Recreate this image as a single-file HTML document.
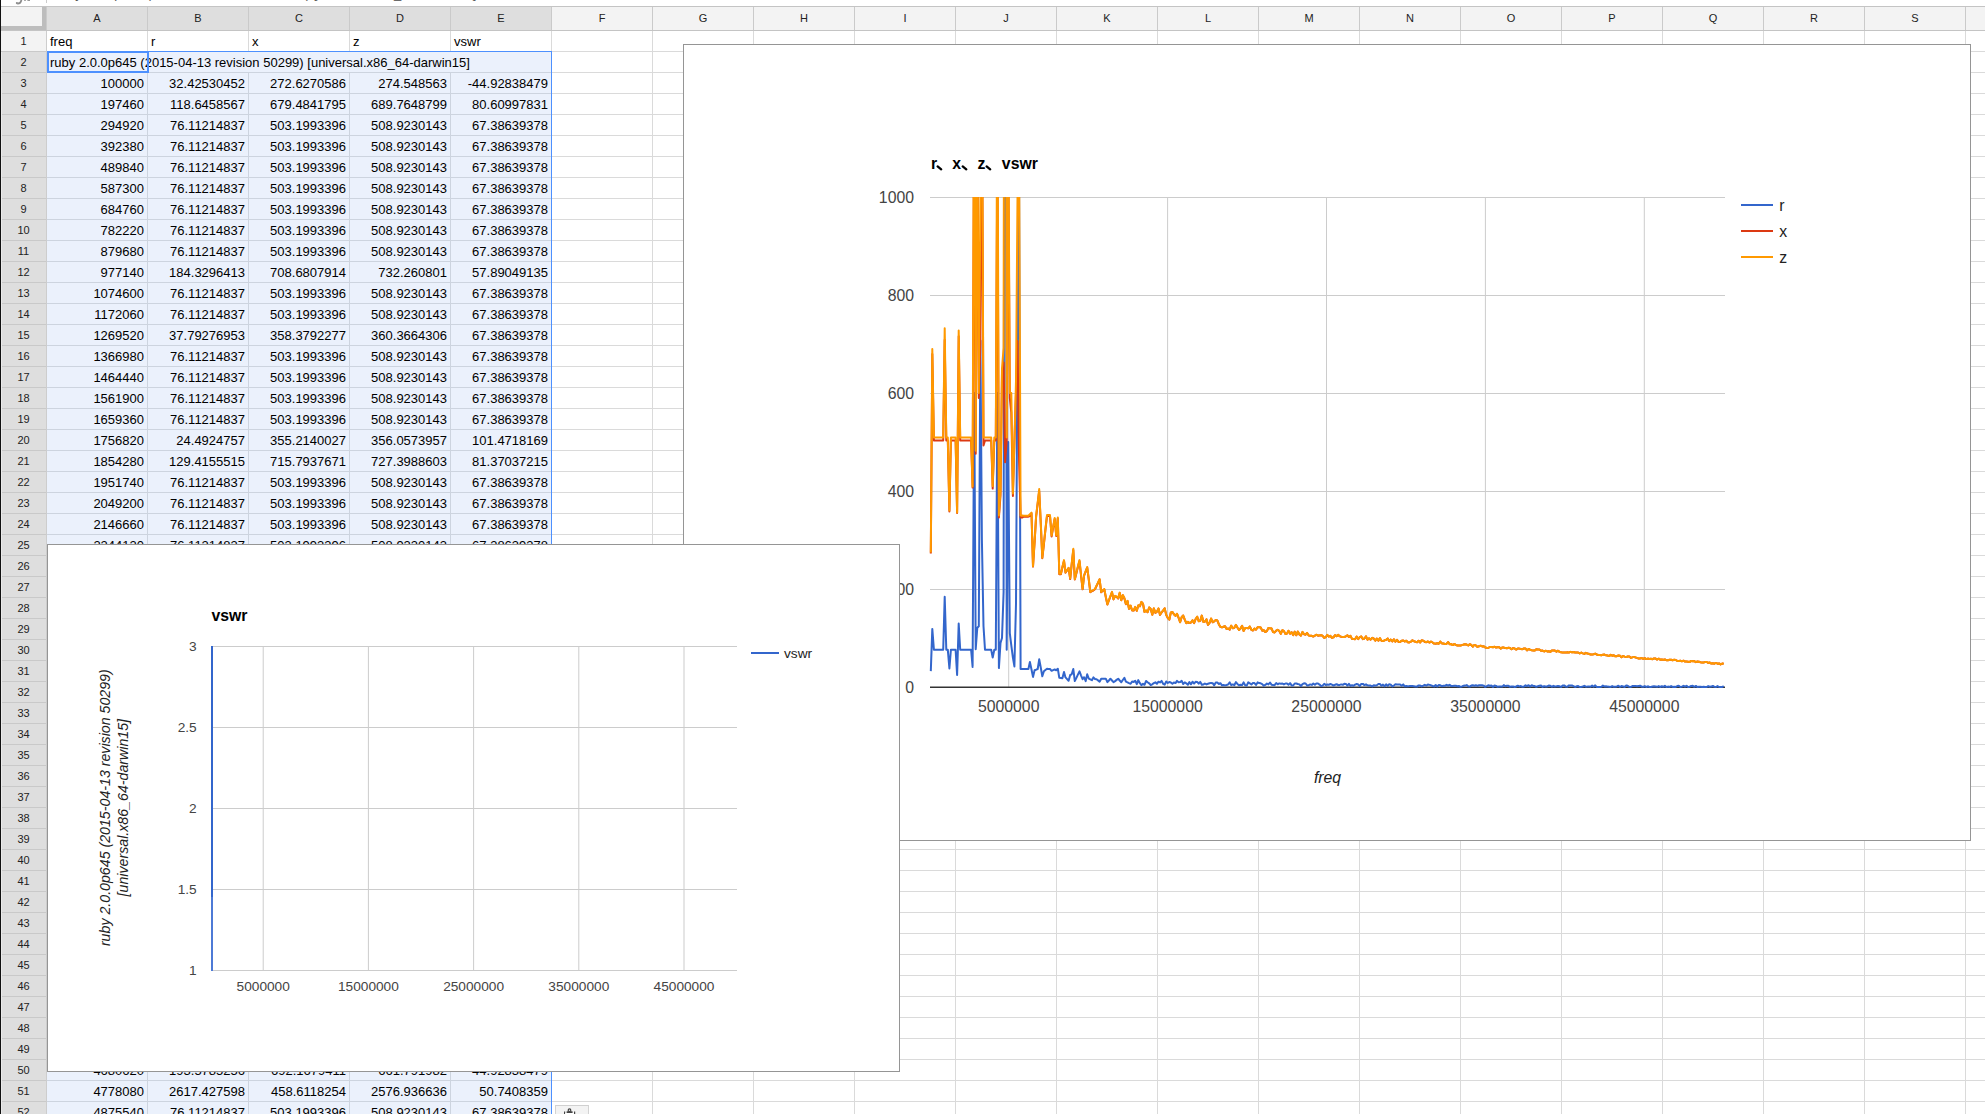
<!DOCTYPE html><html><head><meta charset="utf-8"><style>

html,body{margin:0;padding:0;}
body{width:1985px;height:1114px;overflow:hidden;position:relative;background:#fff;font-family:"Liberation Sans",sans-serif;}
.a{position:absolute;}
.t{position:absolute;white-space:nowrap;font-size:13px;color:#000;line-height:21px;}
.r{text-align:right;}
.ch{position:absolute;top:7px;height:23px;line-height:23px;text-align:center;font-size:11px;color:#222;}
.rh{position:absolute;left:1px;width:45px;height:21px;line-height:21px;text-align:center;font-size:11px;color:#222;}

</style></head><body>
<div class="a" style="left:0;top:0;width:1985px;height:6px;overflow:hidden;background:#fff">
<svg class="a" style="left:0;top:0" width="40" height="6" viewBox="0 0 40 6"><path d="M21.6,-1 C21.2,2.2 19.6,3.9 17.3,3.7" stroke="#8c8c8c" stroke-width="1.7" fill="none"/><circle cx="16.9" cy="3.1" r="1.1" fill="#8c8c8c"/><rect x="24.2" y="0" width="1.6" height="1" fill="#999"/><rect x="27.4" y="0" width="2.6" height="1" fill="#999"/></svg>
<div class="a" style="left:46px;top:0;width:1px;height:3px;background:#ccc"></div>
<div class="t" style="left:56.5px;top:-14.5px;line-height:16px;color:#555">ruby 2.0.0p645 (2015-04-13 revision 50299) [universal.x86_64-darwin15]</div>
</div>
<div class="a" style="left:0;top:6px;width:1985px;height:1px;background:#c4c4c4"></div>
<div class="a" style="left:0;top:7px;width:1985px;height:23px;background:#f3f3f3"></div>
<div class="a" style="left:47px;top:7px;width:504px;height:23px;background:#dedede"></div>
<div class="a" style="left:0;top:30px;width:1985px;height:1px;background:#c4c4c4"></div>
<div class="a" style="left:46px;top:7px;width:1px;height:23px;background:#cacaca"></div>
<div class="ch" style="left:47px;width:100px">A</div>
<div class="a" style="left:147px;top:7px;width:1px;height:23px;background:#cacaca"></div>
<div class="ch" style="left:148px;width:100px">B</div>
<div class="a" style="left:248px;top:7px;width:1px;height:23px;background:#cacaca"></div>
<div class="ch" style="left:249px;width:100px">C</div>
<div class="a" style="left:349px;top:7px;width:1px;height:23px;background:#cacaca"></div>
<div class="ch" style="left:350px;width:100px">D</div>
<div class="a" style="left:450px;top:7px;width:1px;height:23px;background:#cacaca"></div>
<div class="ch" style="left:451px;width:100px">E</div>
<div class="a" style="left:551px;top:7px;width:1px;height:23px;background:#cacaca"></div>
<div class="ch" style="left:552px;width:100px">F</div>
<div class="a" style="left:652px;top:7px;width:1px;height:23px;background:#cacaca"></div>
<div class="ch" style="left:653px;width:100px">G</div>
<div class="a" style="left:753px;top:7px;width:1px;height:23px;background:#cacaca"></div>
<div class="ch" style="left:754px;width:100px">H</div>
<div class="a" style="left:854px;top:7px;width:1px;height:23px;background:#cacaca"></div>
<div class="ch" style="left:855px;width:100px">I</div>
<div class="a" style="left:955px;top:7px;width:1px;height:23px;background:#cacaca"></div>
<div class="ch" style="left:956px;width:100px">J</div>
<div class="a" style="left:1056px;top:7px;width:1px;height:23px;background:#cacaca"></div>
<div class="ch" style="left:1057px;width:100px">K</div>
<div class="a" style="left:1157px;top:7px;width:1px;height:23px;background:#cacaca"></div>
<div class="ch" style="left:1158px;width:100px">L</div>
<div class="a" style="left:1258px;top:7px;width:1px;height:23px;background:#cacaca"></div>
<div class="ch" style="left:1259px;width:100px">M</div>
<div class="a" style="left:1359px;top:7px;width:1px;height:23px;background:#cacaca"></div>
<div class="ch" style="left:1360px;width:100px">N</div>
<div class="a" style="left:1460px;top:7px;width:1px;height:23px;background:#cacaca"></div>
<div class="ch" style="left:1461px;width:100px">O</div>
<div class="a" style="left:1561px;top:7px;width:1px;height:23px;background:#cacaca"></div>
<div class="ch" style="left:1562px;width:100px">P</div>
<div class="a" style="left:1662px;top:7px;width:1px;height:23px;background:#cacaca"></div>
<div class="ch" style="left:1663px;width:100px">Q</div>
<div class="a" style="left:1763px;top:7px;width:1px;height:23px;background:#cacaca"></div>
<div class="ch" style="left:1764px;width:100px">R</div>
<div class="a" style="left:1864px;top:7px;width:1px;height:23px;background:#cacaca"></div>
<div class="ch" style="left:1865px;width:100px">S</div>
<div class="a" style="left:1965px;top:7px;width:1px;height:23px;background:#cacaca"></div>
<div class="ch" style="left:1966px;width:100px">T</div>
<div class="a" style="left:1px;top:7px;width:45px;height:23px;background:#bdbdbd"></div>
<div class="a" style="left:1px;top:7px;width:41px;height:19px;background:#f3f3f3"></div>
<div class="rh" style="top:31px;background:#f3f3f3">1</div>
<div class="a" style="left:1px;top:51px;width:45px;height:1px;background:#c9c9c9"></div>
<div class="rh" style="top:52px;background:#dedede">2</div>
<div class="a" style="left:1px;top:72px;width:45px;height:1px;background:#c9c9c9"></div>
<div class="rh" style="top:73px;background:#dedede">3</div>
<div class="a" style="left:1px;top:93px;width:45px;height:1px;background:#c9c9c9"></div>
<div class="rh" style="top:94px;background:#dedede">4</div>
<div class="a" style="left:1px;top:114px;width:45px;height:1px;background:#c9c9c9"></div>
<div class="rh" style="top:115px;background:#dedede">5</div>
<div class="a" style="left:1px;top:135px;width:45px;height:1px;background:#c9c9c9"></div>
<div class="rh" style="top:136px;background:#dedede">6</div>
<div class="a" style="left:1px;top:156px;width:45px;height:1px;background:#c9c9c9"></div>
<div class="rh" style="top:157px;background:#dedede">7</div>
<div class="a" style="left:1px;top:177px;width:45px;height:1px;background:#c9c9c9"></div>
<div class="rh" style="top:178px;background:#dedede">8</div>
<div class="a" style="left:1px;top:198px;width:45px;height:1px;background:#c9c9c9"></div>
<div class="rh" style="top:199px;background:#dedede">9</div>
<div class="a" style="left:1px;top:219px;width:45px;height:1px;background:#c9c9c9"></div>
<div class="rh" style="top:220px;background:#dedede">10</div>
<div class="a" style="left:1px;top:240px;width:45px;height:1px;background:#c9c9c9"></div>
<div class="rh" style="top:241px;background:#dedede">11</div>
<div class="a" style="left:1px;top:261px;width:45px;height:1px;background:#c9c9c9"></div>
<div class="rh" style="top:262px;background:#dedede">12</div>
<div class="a" style="left:1px;top:282px;width:45px;height:1px;background:#c9c9c9"></div>
<div class="rh" style="top:283px;background:#dedede">13</div>
<div class="a" style="left:1px;top:303px;width:45px;height:1px;background:#c9c9c9"></div>
<div class="rh" style="top:304px;background:#dedede">14</div>
<div class="a" style="left:1px;top:324px;width:45px;height:1px;background:#c9c9c9"></div>
<div class="rh" style="top:325px;background:#dedede">15</div>
<div class="a" style="left:1px;top:345px;width:45px;height:1px;background:#c9c9c9"></div>
<div class="rh" style="top:346px;background:#dedede">16</div>
<div class="a" style="left:1px;top:366px;width:45px;height:1px;background:#c9c9c9"></div>
<div class="rh" style="top:367px;background:#dedede">17</div>
<div class="a" style="left:1px;top:387px;width:45px;height:1px;background:#c9c9c9"></div>
<div class="rh" style="top:388px;background:#dedede">18</div>
<div class="a" style="left:1px;top:408px;width:45px;height:1px;background:#c9c9c9"></div>
<div class="rh" style="top:409px;background:#dedede">19</div>
<div class="a" style="left:1px;top:429px;width:45px;height:1px;background:#c9c9c9"></div>
<div class="rh" style="top:430px;background:#dedede">20</div>
<div class="a" style="left:1px;top:450px;width:45px;height:1px;background:#c9c9c9"></div>
<div class="rh" style="top:451px;background:#dedede">21</div>
<div class="a" style="left:1px;top:471px;width:45px;height:1px;background:#c9c9c9"></div>
<div class="rh" style="top:472px;background:#dedede">22</div>
<div class="a" style="left:1px;top:492px;width:45px;height:1px;background:#c9c9c9"></div>
<div class="rh" style="top:493px;background:#dedede">23</div>
<div class="a" style="left:1px;top:513px;width:45px;height:1px;background:#c9c9c9"></div>
<div class="rh" style="top:514px;background:#dedede">24</div>
<div class="a" style="left:1px;top:534px;width:45px;height:1px;background:#c9c9c9"></div>
<div class="rh" style="top:535px;background:#dedede">25</div>
<div class="a" style="left:1px;top:555px;width:45px;height:1px;background:#c9c9c9"></div>
<div class="rh" style="top:556px;background:#dedede">26</div>
<div class="a" style="left:1px;top:576px;width:45px;height:1px;background:#c9c9c9"></div>
<div class="rh" style="top:577px;background:#dedede">27</div>
<div class="a" style="left:1px;top:597px;width:45px;height:1px;background:#c9c9c9"></div>
<div class="rh" style="top:598px;background:#dedede">28</div>
<div class="a" style="left:1px;top:618px;width:45px;height:1px;background:#c9c9c9"></div>
<div class="rh" style="top:619px;background:#dedede">29</div>
<div class="a" style="left:1px;top:639px;width:45px;height:1px;background:#c9c9c9"></div>
<div class="rh" style="top:640px;background:#dedede">30</div>
<div class="a" style="left:1px;top:660px;width:45px;height:1px;background:#c9c9c9"></div>
<div class="rh" style="top:661px;background:#dedede">31</div>
<div class="a" style="left:1px;top:681px;width:45px;height:1px;background:#c9c9c9"></div>
<div class="rh" style="top:682px;background:#dedede">32</div>
<div class="a" style="left:1px;top:702px;width:45px;height:1px;background:#c9c9c9"></div>
<div class="rh" style="top:703px;background:#dedede">33</div>
<div class="a" style="left:1px;top:723px;width:45px;height:1px;background:#c9c9c9"></div>
<div class="rh" style="top:724px;background:#dedede">34</div>
<div class="a" style="left:1px;top:744px;width:45px;height:1px;background:#c9c9c9"></div>
<div class="rh" style="top:745px;background:#dedede">35</div>
<div class="a" style="left:1px;top:765px;width:45px;height:1px;background:#c9c9c9"></div>
<div class="rh" style="top:766px;background:#dedede">36</div>
<div class="a" style="left:1px;top:786px;width:45px;height:1px;background:#c9c9c9"></div>
<div class="rh" style="top:787px;background:#dedede">37</div>
<div class="a" style="left:1px;top:807px;width:45px;height:1px;background:#c9c9c9"></div>
<div class="rh" style="top:808px;background:#dedede">38</div>
<div class="a" style="left:1px;top:828px;width:45px;height:1px;background:#c9c9c9"></div>
<div class="rh" style="top:829px;background:#dedede">39</div>
<div class="a" style="left:1px;top:849px;width:45px;height:1px;background:#c9c9c9"></div>
<div class="rh" style="top:850px;background:#dedede">40</div>
<div class="a" style="left:1px;top:870px;width:45px;height:1px;background:#c9c9c9"></div>
<div class="rh" style="top:871px;background:#dedede">41</div>
<div class="a" style="left:1px;top:891px;width:45px;height:1px;background:#c9c9c9"></div>
<div class="rh" style="top:892px;background:#dedede">42</div>
<div class="a" style="left:1px;top:912px;width:45px;height:1px;background:#c9c9c9"></div>
<div class="rh" style="top:913px;background:#dedede">43</div>
<div class="a" style="left:1px;top:933px;width:45px;height:1px;background:#c9c9c9"></div>
<div class="rh" style="top:934px;background:#dedede">44</div>
<div class="a" style="left:1px;top:954px;width:45px;height:1px;background:#c9c9c9"></div>
<div class="rh" style="top:955px;background:#dedede">45</div>
<div class="a" style="left:1px;top:975px;width:45px;height:1px;background:#c9c9c9"></div>
<div class="rh" style="top:976px;background:#dedede">46</div>
<div class="a" style="left:1px;top:996px;width:45px;height:1px;background:#c9c9c9"></div>
<div class="rh" style="top:997px;background:#dedede">47</div>
<div class="a" style="left:1px;top:1017px;width:45px;height:1px;background:#c9c9c9"></div>
<div class="rh" style="top:1018px;background:#dedede">48</div>
<div class="a" style="left:1px;top:1038px;width:45px;height:1px;background:#c9c9c9"></div>
<div class="rh" style="top:1039px;background:#dedede">49</div>
<div class="a" style="left:1px;top:1059px;width:45px;height:1px;background:#c9c9c9"></div>
<div class="rh" style="top:1060px;background:#dedede">50</div>
<div class="a" style="left:1px;top:1080px;width:45px;height:1px;background:#c9c9c9"></div>
<div class="rh" style="top:1081px;background:#dedede">51</div>
<div class="a" style="left:1px;top:1101px;width:45px;height:1px;background:#c9c9c9"></div>
<div class="rh" style="top:1102px;background:#dedede">52</div>
<div class="a" style="left:1px;top:1122px;width:45px;height:1px;background:#c9c9c9"></div>
<div class="rh" style="top:1123px;background:#dedede">53</div>
<div class="a" style="left:1px;top:1143px;width:45px;height:1px;background:#c9c9c9"></div>
<div class="a" style="left:46px;top:31px;width:1px;height:1083px;background:#cdcdcd"></div>
<div class="a" style="left:47px;top:52px;width:504px;height:1062px;background:#ebf1fc"></div>
<div class="a" style="left:47px;top:51px;width:1938px;height:1px;background:#dadada"></div>
<div class="a" style="left:47px;top:72px;width:1938px;height:1px;background:#dadada"></div>
<div class="a" style="left:47px;top:72px;width:504px;height:1px;background:#cdd4df"></div>
<div class="a" style="left:47px;top:93px;width:1938px;height:1px;background:#dadada"></div>
<div class="a" style="left:47px;top:93px;width:504px;height:1px;background:#cdd4df"></div>
<div class="a" style="left:47px;top:114px;width:1938px;height:1px;background:#dadada"></div>
<div class="a" style="left:47px;top:114px;width:504px;height:1px;background:#cdd4df"></div>
<div class="a" style="left:47px;top:135px;width:1938px;height:1px;background:#dadada"></div>
<div class="a" style="left:47px;top:135px;width:504px;height:1px;background:#cdd4df"></div>
<div class="a" style="left:47px;top:156px;width:1938px;height:1px;background:#dadada"></div>
<div class="a" style="left:47px;top:156px;width:504px;height:1px;background:#cdd4df"></div>
<div class="a" style="left:47px;top:177px;width:1938px;height:1px;background:#dadada"></div>
<div class="a" style="left:47px;top:177px;width:504px;height:1px;background:#cdd4df"></div>
<div class="a" style="left:47px;top:198px;width:1938px;height:1px;background:#dadada"></div>
<div class="a" style="left:47px;top:198px;width:504px;height:1px;background:#cdd4df"></div>
<div class="a" style="left:47px;top:219px;width:1938px;height:1px;background:#dadada"></div>
<div class="a" style="left:47px;top:219px;width:504px;height:1px;background:#cdd4df"></div>
<div class="a" style="left:47px;top:240px;width:1938px;height:1px;background:#dadada"></div>
<div class="a" style="left:47px;top:240px;width:504px;height:1px;background:#cdd4df"></div>
<div class="a" style="left:47px;top:261px;width:1938px;height:1px;background:#dadada"></div>
<div class="a" style="left:47px;top:261px;width:504px;height:1px;background:#cdd4df"></div>
<div class="a" style="left:47px;top:282px;width:1938px;height:1px;background:#dadada"></div>
<div class="a" style="left:47px;top:282px;width:504px;height:1px;background:#cdd4df"></div>
<div class="a" style="left:47px;top:303px;width:1938px;height:1px;background:#dadada"></div>
<div class="a" style="left:47px;top:303px;width:504px;height:1px;background:#cdd4df"></div>
<div class="a" style="left:47px;top:324px;width:1938px;height:1px;background:#dadada"></div>
<div class="a" style="left:47px;top:324px;width:504px;height:1px;background:#cdd4df"></div>
<div class="a" style="left:47px;top:345px;width:1938px;height:1px;background:#dadada"></div>
<div class="a" style="left:47px;top:345px;width:504px;height:1px;background:#cdd4df"></div>
<div class="a" style="left:47px;top:366px;width:1938px;height:1px;background:#dadada"></div>
<div class="a" style="left:47px;top:366px;width:504px;height:1px;background:#cdd4df"></div>
<div class="a" style="left:47px;top:387px;width:1938px;height:1px;background:#dadada"></div>
<div class="a" style="left:47px;top:387px;width:504px;height:1px;background:#cdd4df"></div>
<div class="a" style="left:47px;top:408px;width:1938px;height:1px;background:#dadada"></div>
<div class="a" style="left:47px;top:408px;width:504px;height:1px;background:#cdd4df"></div>
<div class="a" style="left:47px;top:429px;width:1938px;height:1px;background:#dadada"></div>
<div class="a" style="left:47px;top:429px;width:504px;height:1px;background:#cdd4df"></div>
<div class="a" style="left:47px;top:450px;width:1938px;height:1px;background:#dadada"></div>
<div class="a" style="left:47px;top:450px;width:504px;height:1px;background:#cdd4df"></div>
<div class="a" style="left:47px;top:471px;width:1938px;height:1px;background:#dadada"></div>
<div class="a" style="left:47px;top:471px;width:504px;height:1px;background:#cdd4df"></div>
<div class="a" style="left:47px;top:492px;width:1938px;height:1px;background:#dadada"></div>
<div class="a" style="left:47px;top:492px;width:504px;height:1px;background:#cdd4df"></div>
<div class="a" style="left:47px;top:513px;width:1938px;height:1px;background:#dadada"></div>
<div class="a" style="left:47px;top:513px;width:504px;height:1px;background:#cdd4df"></div>
<div class="a" style="left:47px;top:534px;width:1938px;height:1px;background:#dadada"></div>
<div class="a" style="left:47px;top:534px;width:504px;height:1px;background:#cdd4df"></div>
<div class="a" style="left:47px;top:555px;width:1938px;height:1px;background:#dadada"></div>
<div class="a" style="left:47px;top:555px;width:504px;height:1px;background:#cdd4df"></div>
<div class="a" style="left:47px;top:576px;width:1938px;height:1px;background:#dadada"></div>
<div class="a" style="left:47px;top:576px;width:504px;height:1px;background:#cdd4df"></div>
<div class="a" style="left:47px;top:597px;width:1938px;height:1px;background:#dadada"></div>
<div class="a" style="left:47px;top:597px;width:504px;height:1px;background:#cdd4df"></div>
<div class="a" style="left:47px;top:618px;width:1938px;height:1px;background:#dadada"></div>
<div class="a" style="left:47px;top:618px;width:504px;height:1px;background:#cdd4df"></div>
<div class="a" style="left:47px;top:639px;width:1938px;height:1px;background:#dadada"></div>
<div class="a" style="left:47px;top:639px;width:504px;height:1px;background:#cdd4df"></div>
<div class="a" style="left:47px;top:660px;width:1938px;height:1px;background:#dadada"></div>
<div class="a" style="left:47px;top:660px;width:504px;height:1px;background:#cdd4df"></div>
<div class="a" style="left:47px;top:681px;width:1938px;height:1px;background:#dadada"></div>
<div class="a" style="left:47px;top:681px;width:504px;height:1px;background:#cdd4df"></div>
<div class="a" style="left:47px;top:702px;width:1938px;height:1px;background:#dadada"></div>
<div class="a" style="left:47px;top:702px;width:504px;height:1px;background:#cdd4df"></div>
<div class="a" style="left:47px;top:723px;width:1938px;height:1px;background:#dadada"></div>
<div class="a" style="left:47px;top:723px;width:504px;height:1px;background:#cdd4df"></div>
<div class="a" style="left:47px;top:744px;width:1938px;height:1px;background:#dadada"></div>
<div class="a" style="left:47px;top:744px;width:504px;height:1px;background:#cdd4df"></div>
<div class="a" style="left:47px;top:765px;width:1938px;height:1px;background:#dadada"></div>
<div class="a" style="left:47px;top:765px;width:504px;height:1px;background:#cdd4df"></div>
<div class="a" style="left:47px;top:786px;width:1938px;height:1px;background:#dadada"></div>
<div class="a" style="left:47px;top:786px;width:504px;height:1px;background:#cdd4df"></div>
<div class="a" style="left:47px;top:807px;width:1938px;height:1px;background:#dadada"></div>
<div class="a" style="left:47px;top:807px;width:504px;height:1px;background:#cdd4df"></div>
<div class="a" style="left:47px;top:828px;width:1938px;height:1px;background:#dadada"></div>
<div class="a" style="left:47px;top:828px;width:504px;height:1px;background:#cdd4df"></div>
<div class="a" style="left:47px;top:849px;width:1938px;height:1px;background:#dadada"></div>
<div class="a" style="left:47px;top:849px;width:504px;height:1px;background:#cdd4df"></div>
<div class="a" style="left:47px;top:870px;width:1938px;height:1px;background:#dadada"></div>
<div class="a" style="left:47px;top:870px;width:504px;height:1px;background:#cdd4df"></div>
<div class="a" style="left:47px;top:891px;width:1938px;height:1px;background:#dadada"></div>
<div class="a" style="left:47px;top:891px;width:504px;height:1px;background:#cdd4df"></div>
<div class="a" style="left:47px;top:912px;width:1938px;height:1px;background:#dadada"></div>
<div class="a" style="left:47px;top:912px;width:504px;height:1px;background:#cdd4df"></div>
<div class="a" style="left:47px;top:933px;width:1938px;height:1px;background:#dadada"></div>
<div class="a" style="left:47px;top:933px;width:504px;height:1px;background:#cdd4df"></div>
<div class="a" style="left:47px;top:954px;width:1938px;height:1px;background:#dadada"></div>
<div class="a" style="left:47px;top:954px;width:504px;height:1px;background:#cdd4df"></div>
<div class="a" style="left:47px;top:975px;width:1938px;height:1px;background:#dadada"></div>
<div class="a" style="left:47px;top:975px;width:504px;height:1px;background:#cdd4df"></div>
<div class="a" style="left:47px;top:996px;width:1938px;height:1px;background:#dadada"></div>
<div class="a" style="left:47px;top:996px;width:504px;height:1px;background:#cdd4df"></div>
<div class="a" style="left:47px;top:1017px;width:1938px;height:1px;background:#dadada"></div>
<div class="a" style="left:47px;top:1017px;width:504px;height:1px;background:#cdd4df"></div>
<div class="a" style="left:47px;top:1038px;width:1938px;height:1px;background:#dadada"></div>
<div class="a" style="left:47px;top:1038px;width:504px;height:1px;background:#cdd4df"></div>
<div class="a" style="left:47px;top:1059px;width:1938px;height:1px;background:#dadada"></div>
<div class="a" style="left:47px;top:1059px;width:504px;height:1px;background:#cdd4df"></div>
<div class="a" style="left:47px;top:1080px;width:1938px;height:1px;background:#dadada"></div>
<div class="a" style="left:47px;top:1080px;width:504px;height:1px;background:#cdd4df"></div>
<div class="a" style="left:47px;top:1101px;width:1938px;height:1px;background:#dadada"></div>
<div class="a" style="left:47px;top:1101px;width:504px;height:1px;background:#cdd4df"></div>
<div class="a" style="left:47px;top:1122px;width:1938px;height:1px;background:#dadada"></div>
<div class="a" style="left:47px;top:1122px;width:504px;height:1px;background:#cdd4df"></div>
<div class="a" style="left:47px;top:1143px;width:1938px;height:1px;background:#dadada"></div>
<div class="a" style="left:47px;top:1143px;width:504px;height:1px;background:#cdd4df"></div>
<div class="a" style="left:147px;top:31px;width:1px;height:1083px;background:#dadada"></div>
<div class="a" style="left:147px;top:52px;width:1px;height:1062px;background:#cdd4df"></div>
<div class="a" style="left:248px;top:31px;width:1px;height:1083px;background:#dadada"></div>
<div class="a" style="left:248px;top:52px;width:1px;height:1062px;background:#cdd4df"></div>
<div class="a" style="left:349px;top:31px;width:1px;height:1083px;background:#dadada"></div>
<div class="a" style="left:349px;top:52px;width:1px;height:1062px;background:#cdd4df"></div>
<div class="a" style="left:450px;top:31px;width:1px;height:1083px;background:#dadada"></div>
<div class="a" style="left:450px;top:52px;width:1px;height:1062px;background:#cdd4df"></div>
<div class="a" style="left:551px;top:31px;width:1px;height:1083px;background:#dadada"></div>
<div class="a" style="left:551px;top:52px;width:1px;height:1062px;background:#cdd4df"></div>
<div class="a" style="left:652px;top:31px;width:1px;height:1083px;background:#dadada"></div>
<div class="a" style="left:753px;top:31px;width:1px;height:1083px;background:#dadada"></div>
<div class="a" style="left:854px;top:31px;width:1px;height:1083px;background:#dadada"></div>
<div class="a" style="left:955px;top:31px;width:1px;height:1083px;background:#dadada"></div>
<div class="a" style="left:1056px;top:31px;width:1px;height:1083px;background:#dadada"></div>
<div class="a" style="left:1157px;top:31px;width:1px;height:1083px;background:#dadada"></div>
<div class="a" style="left:1258px;top:31px;width:1px;height:1083px;background:#dadada"></div>
<div class="a" style="left:1359px;top:31px;width:1px;height:1083px;background:#dadada"></div>
<div class="a" style="left:1460px;top:31px;width:1px;height:1083px;background:#dadada"></div>
<div class="a" style="left:1561px;top:31px;width:1px;height:1083px;background:#dadada"></div>
<div class="a" style="left:1662px;top:31px;width:1px;height:1083px;background:#dadada"></div>
<div class="a" style="left:1763px;top:31px;width:1px;height:1083px;background:#dadada"></div>
<div class="a" style="left:1864px;top:31px;width:1px;height:1083px;background:#dadada"></div>
<div class="a" style="left:1965px;top:31px;width:1px;height:1083px;background:#dadada"></div>
<div class="t" style="left:50px;top:31px">freq</div>
<div class="t" style="left:151px;top:31px">r</div>
<div class="t" style="left:252px;top:31px">x</div>
<div class="t" style="left:353px;top:31px">z</div>
<div class="t" style="left:454px;top:31px">vswr</div>
<div class="t r" style="left:47px;top:73px;width:97px">100000</div>
<div class="t r" style="left:148px;top:73px;width:97px">32.42530452</div>
<div class="t r" style="left:249px;top:73px;width:97px">272.6270586</div>
<div class="t r" style="left:350px;top:73px;width:97px">274.548563</div>
<div class="t r" style="left:451px;top:73px;width:97px">-44.92838479</div>
<div class="t r" style="left:47px;top:94px;width:97px">197460</div>
<div class="t r" style="left:148px;top:94px;width:97px">118.6458567</div>
<div class="t r" style="left:249px;top:94px;width:97px">679.4841795</div>
<div class="t r" style="left:350px;top:94px;width:97px">689.7648799</div>
<div class="t r" style="left:451px;top:94px;width:97px">80.60997831</div>
<div class="t r" style="left:47px;top:115px;width:97px">294920</div>
<div class="t r" style="left:148px;top:115px;width:97px">76.11214837</div>
<div class="t r" style="left:249px;top:115px;width:97px">503.1993396</div>
<div class="t r" style="left:350px;top:115px;width:97px">508.9230143</div>
<div class="t r" style="left:451px;top:115px;width:97px">67.38639378</div>
<div class="t r" style="left:47px;top:136px;width:97px">392380</div>
<div class="t r" style="left:148px;top:136px;width:97px">76.11214837</div>
<div class="t r" style="left:249px;top:136px;width:97px">503.1993396</div>
<div class="t r" style="left:350px;top:136px;width:97px">508.9230143</div>
<div class="t r" style="left:451px;top:136px;width:97px">67.38639378</div>
<div class="t r" style="left:47px;top:157px;width:97px">489840</div>
<div class="t r" style="left:148px;top:157px;width:97px">76.11214837</div>
<div class="t r" style="left:249px;top:157px;width:97px">503.1993396</div>
<div class="t r" style="left:350px;top:157px;width:97px">508.9230143</div>
<div class="t r" style="left:451px;top:157px;width:97px">67.38639378</div>
<div class="t r" style="left:47px;top:178px;width:97px">587300</div>
<div class="t r" style="left:148px;top:178px;width:97px">76.11214837</div>
<div class="t r" style="left:249px;top:178px;width:97px">503.1993396</div>
<div class="t r" style="left:350px;top:178px;width:97px">508.9230143</div>
<div class="t r" style="left:451px;top:178px;width:97px">67.38639378</div>
<div class="t r" style="left:47px;top:199px;width:97px">684760</div>
<div class="t r" style="left:148px;top:199px;width:97px">76.11214837</div>
<div class="t r" style="left:249px;top:199px;width:97px">503.1993396</div>
<div class="t r" style="left:350px;top:199px;width:97px">508.9230143</div>
<div class="t r" style="left:451px;top:199px;width:97px">67.38639378</div>
<div class="t r" style="left:47px;top:220px;width:97px">782220</div>
<div class="t r" style="left:148px;top:220px;width:97px">76.11214837</div>
<div class="t r" style="left:249px;top:220px;width:97px">503.1993396</div>
<div class="t r" style="left:350px;top:220px;width:97px">508.9230143</div>
<div class="t r" style="left:451px;top:220px;width:97px">67.38639378</div>
<div class="t r" style="left:47px;top:241px;width:97px">879680</div>
<div class="t r" style="left:148px;top:241px;width:97px">76.11214837</div>
<div class="t r" style="left:249px;top:241px;width:97px">503.1993396</div>
<div class="t r" style="left:350px;top:241px;width:97px">508.9230143</div>
<div class="t r" style="left:451px;top:241px;width:97px">67.38639378</div>
<div class="t r" style="left:47px;top:262px;width:97px">977140</div>
<div class="t r" style="left:148px;top:262px;width:97px">184.3296413</div>
<div class="t r" style="left:249px;top:262px;width:97px">708.6807914</div>
<div class="t r" style="left:350px;top:262px;width:97px">732.260801</div>
<div class="t r" style="left:451px;top:262px;width:97px">57.89049135</div>
<div class="t r" style="left:47px;top:283px;width:97px">1074600</div>
<div class="t r" style="left:148px;top:283px;width:97px">76.11214837</div>
<div class="t r" style="left:249px;top:283px;width:97px">503.1993396</div>
<div class="t r" style="left:350px;top:283px;width:97px">508.9230143</div>
<div class="t r" style="left:451px;top:283px;width:97px">67.38639378</div>
<div class="t r" style="left:47px;top:304px;width:97px">1172060</div>
<div class="t r" style="left:148px;top:304px;width:97px">76.11214837</div>
<div class="t r" style="left:249px;top:304px;width:97px">503.1993396</div>
<div class="t r" style="left:350px;top:304px;width:97px">508.9230143</div>
<div class="t r" style="left:451px;top:304px;width:97px">67.38639378</div>
<div class="t r" style="left:47px;top:325px;width:97px">1269520</div>
<div class="t r" style="left:148px;top:325px;width:97px">37.79276953</div>
<div class="t r" style="left:249px;top:325px;width:97px">358.3792277</div>
<div class="t r" style="left:350px;top:325px;width:97px">360.3664306</div>
<div class="t r" style="left:451px;top:325px;width:97px">67.38639378</div>
<div class="t r" style="left:47px;top:346px;width:97px">1366980</div>
<div class="t r" style="left:148px;top:346px;width:97px">76.11214837</div>
<div class="t r" style="left:249px;top:346px;width:97px">503.1993396</div>
<div class="t r" style="left:350px;top:346px;width:97px">508.9230143</div>
<div class="t r" style="left:451px;top:346px;width:97px">67.38639378</div>
<div class="t r" style="left:47px;top:367px;width:97px">1464440</div>
<div class="t r" style="left:148px;top:367px;width:97px">76.11214837</div>
<div class="t r" style="left:249px;top:367px;width:97px">503.1993396</div>
<div class="t r" style="left:350px;top:367px;width:97px">508.9230143</div>
<div class="t r" style="left:451px;top:367px;width:97px">67.38639378</div>
<div class="t r" style="left:47px;top:388px;width:97px">1561900</div>
<div class="t r" style="left:148px;top:388px;width:97px">76.11214837</div>
<div class="t r" style="left:249px;top:388px;width:97px">503.1993396</div>
<div class="t r" style="left:350px;top:388px;width:97px">508.9230143</div>
<div class="t r" style="left:451px;top:388px;width:97px">67.38639378</div>
<div class="t r" style="left:47px;top:409px;width:97px">1659360</div>
<div class="t r" style="left:148px;top:409px;width:97px">76.11214837</div>
<div class="t r" style="left:249px;top:409px;width:97px">503.1993396</div>
<div class="t r" style="left:350px;top:409px;width:97px">508.9230143</div>
<div class="t r" style="left:451px;top:409px;width:97px">67.38639378</div>
<div class="t r" style="left:47px;top:430px;width:97px">1756820</div>
<div class="t r" style="left:148px;top:430px;width:97px">24.4924757</div>
<div class="t r" style="left:249px;top:430px;width:97px">355.2140027</div>
<div class="t r" style="left:350px;top:430px;width:97px">356.0573957</div>
<div class="t r" style="left:451px;top:430px;width:97px">101.4718169</div>
<div class="t r" style="left:47px;top:451px;width:97px">1854280</div>
<div class="t r" style="left:148px;top:451px;width:97px">129.4155515</div>
<div class="t r" style="left:249px;top:451px;width:97px">715.7937671</div>
<div class="t r" style="left:350px;top:451px;width:97px">727.3988603</div>
<div class="t r" style="left:451px;top:451px;width:97px">81.37037215</div>
<div class="t r" style="left:47px;top:472px;width:97px">1951740</div>
<div class="t r" style="left:148px;top:472px;width:97px">76.11214837</div>
<div class="t r" style="left:249px;top:472px;width:97px">503.1993396</div>
<div class="t r" style="left:350px;top:472px;width:97px">508.9230143</div>
<div class="t r" style="left:451px;top:472px;width:97px">67.38639378</div>
<div class="t r" style="left:47px;top:493px;width:97px">2049200</div>
<div class="t r" style="left:148px;top:493px;width:97px">76.11214837</div>
<div class="t r" style="left:249px;top:493px;width:97px">503.1993396</div>
<div class="t r" style="left:350px;top:493px;width:97px">508.9230143</div>
<div class="t r" style="left:451px;top:493px;width:97px">67.38639378</div>
<div class="t r" style="left:47px;top:514px;width:97px">2146660</div>
<div class="t r" style="left:148px;top:514px;width:97px">76.11214837</div>
<div class="t r" style="left:249px;top:514px;width:97px">503.1993396</div>
<div class="t r" style="left:350px;top:514px;width:97px">508.9230143</div>
<div class="t r" style="left:451px;top:514px;width:97px">67.38639378</div>
<div class="t r" style="left:47px;top:535px;width:97px">2244120</div>
<div class="t r" style="left:148px;top:535px;width:97px">76.11214837</div>
<div class="t r" style="left:249px;top:535px;width:97px">503.1993396</div>
<div class="t r" style="left:350px;top:535px;width:97px">508.9230143</div>
<div class="t r" style="left:451px;top:535px;width:97px">67.38639378</div>
<div class="t r" style="left:47px;top:556px;width:97px">2341580</div>
<div class="t r" style="left:148px;top:556px;width:97px">76.11214837</div>
<div class="t r" style="left:249px;top:556px;width:97px">503.1993396</div>
<div class="t r" style="left:350px;top:556px;width:97px">508.9230143</div>
<div class="t r" style="left:451px;top:556px;width:97px">67.38639378</div>
<div class="t r" style="left:47px;top:577px;width:97px">2439040</div>
<div class="t r" style="left:148px;top:577px;width:97px">76.11214837</div>
<div class="t r" style="left:249px;top:577px;width:97px">503.1993396</div>
<div class="t r" style="left:350px;top:577px;width:97px">508.9230143</div>
<div class="t r" style="left:451px;top:577px;width:97px">67.38639378</div>
<div class="t r" style="left:47px;top:598px;width:97px">2536500</div>
<div class="t r" style="left:148px;top:598px;width:97px">76.11214837</div>
<div class="t r" style="left:249px;top:598px;width:97px">503.1993396</div>
<div class="t r" style="left:350px;top:598px;width:97px">508.9230143</div>
<div class="t r" style="left:451px;top:598px;width:97px">67.38639378</div>
<div class="t r" style="left:47px;top:619px;width:97px">2633960</div>
<div class="t r" style="left:148px;top:619px;width:97px">76.11214837</div>
<div class="t r" style="left:249px;top:619px;width:97px">503.1993396</div>
<div class="t r" style="left:350px;top:619px;width:97px">508.9230143</div>
<div class="t r" style="left:451px;top:619px;width:97px">67.38639378</div>
<div class="t r" style="left:47px;top:640px;width:97px">2731420</div>
<div class="t r" style="left:148px;top:640px;width:97px">76.11214837</div>
<div class="t r" style="left:249px;top:640px;width:97px">503.1993396</div>
<div class="t r" style="left:350px;top:640px;width:97px">508.9230143</div>
<div class="t r" style="left:451px;top:640px;width:97px">67.38639378</div>
<div class="t r" style="left:47px;top:661px;width:97px">2828880</div>
<div class="t r" style="left:148px;top:661px;width:97px">76.11214837</div>
<div class="t r" style="left:249px;top:661px;width:97px">503.1993396</div>
<div class="t r" style="left:350px;top:661px;width:97px">508.9230143</div>
<div class="t r" style="left:451px;top:661px;width:97px">67.38639378</div>
<div class="t r" style="left:47px;top:682px;width:97px">2926340</div>
<div class="t r" style="left:148px;top:682px;width:97px">76.11214837</div>
<div class="t r" style="left:249px;top:682px;width:97px">503.1993396</div>
<div class="t r" style="left:350px;top:682px;width:97px">508.9230143</div>
<div class="t r" style="left:451px;top:682px;width:97px">67.38639378</div>
<div class="t r" style="left:47px;top:703px;width:97px">3023800</div>
<div class="t r" style="left:148px;top:703px;width:97px">76.11214837</div>
<div class="t r" style="left:249px;top:703px;width:97px">503.1993396</div>
<div class="t r" style="left:350px;top:703px;width:97px">508.9230143</div>
<div class="t r" style="left:451px;top:703px;width:97px">67.38639378</div>
<div class="t r" style="left:47px;top:724px;width:97px">3121260</div>
<div class="t r" style="left:148px;top:724px;width:97px">76.11214837</div>
<div class="t r" style="left:249px;top:724px;width:97px">503.1993396</div>
<div class="t r" style="left:350px;top:724px;width:97px">508.9230143</div>
<div class="t r" style="left:451px;top:724px;width:97px">67.38639378</div>
<div class="t r" style="left:47px;top:745px;width:97px">3218720</div>
<div class="t r" style="left:148px;top:745px;width:97px">76.11214837</div>
<div class="t r" style="left:249px;top:745px;width:97px">503.1993396</div>
<div class="t r" style="left:350px;top:745px;width:97px">508.9230143</div>
<div class="t r" style="left:451px;top:745px;width:97px">67.38639378</div>
<div class="t r" style="left:47px;top:766px;width:97px">3316180</div>
<div class="t r" style="left:148px;top:766px;width:97px">76.11214837</div>
<div class="t r" style="left:249px;top:766px;width:97px">503.1993396</div>
<div class="t r" style="left:350px;top:766px;width:97px">508.9230143</div>
<div class="t r" style="left:451px;top:766px;width:97px">67.38639378</div>
<div class="t r" style="left:47px;top:787px;width:97px">3413640</div>
<div class="t r" style="left:148px;top:787px;width:97px">76.11214837</div>
<div class="t r" style="left:249px;top:787px;width:97px">503.1993396</div>
<div class="t r" style="left:350px;top:787px;width:97px">508.9230143</div>
<div class="t r" style="left:451px;top:787px;width:97px">67.38639378</div>
<div class="t r" style="left:47px;top:808px;width:97px">3511100</div>
<div class="t r" style="left:148px;top:808px;width:97px">76.11214837</div>
<div class="t r" style="left:249px;top:808px;width:97px">503.1993396</div>
<div class="t r" style="left:350px;top:808px;width:97px">508.9230143</div>
<div class="t r" style="left:451px;top:808px;width:97px">67.38639378</div>
<div class="t r" style="left:47px;top:829px;width:97px">3608560</div>
<div class="t r" style="left:148px;top:829px;width:97px">76.11214837</div>
<div class="t r" style="left:249px;top:829px;width:97px">503.1993396</div>
<div class="t r" style="left:350px;top:829px;width:97px">508.9230143</div>
<div class="t r" style="left:451px;top:829px;width:97px">67.38639378</div>
<div class="t r" style="left:47px;top:850px;width:97px">3706020</div>
<div class="t r" style="left:148px;top:850px;width:97px">76.11214837</div>
<div class="t r" style="left:249px;top:850px;width:97px">503.1993396</div>
<div class="t r" style="left:350px;top:850px;width:97px">508.9230143</div>
<div class="t r" style="left:451px;top:850px;width:97px">67.38639378</div>
<div class="t r" style="left:47px;top:871px;width:97px">3803480</div>
<div class="t r" style="left:148px;top:871px;width:97px">76.11214837</div>
<div class="t r" style="left:249px;top:871px;width:97px">503.1993396</div>
<div class="t r" style="left:350px;top:871px;width:97px">508.9230143</div>
<div class="t r" style="left:451px;top:871px;width:97px">67.38639378</div>
<div class="t r" style="left:47px;top:892px;width:97px">3900940</div>
<div class="t r" style="left:148px;top:892px;width:97px">76.11214837</div>
<div class="t r" style="left:249px;top:892px;width:97px">503.1993396</div>
<div class="t r" style="left:350px;top:892px;width:97px">508.9230143</div>
<div class="t r" style="left:451px;top:892px;width:97px">67.38639378</div>
<div class="t r" style="left:47px;top:913px;width:97px">3998400</div>
<div class="t r" style="left:148px;top:913px;width:97px">76.11214837</div>
<div class="t r" style="left:249px;top:913px;width:97px">503.1993396</div>
<div class="t r" style="left:350px;top:913px;width:97px">508.9230143</div>
<div class="t r" style="left:451px;top:913px;width:97px">67.38639378</div>
<div class="t r" style="left:47px;top:934px;width:97px">4095860</div>
<div class="t r" style="left:148px;top:934px;width:97px">76.11214837</div>
<div class="t r" style="left:249px;top:934px;width:97px">503.1993396</div>
<div class="t r" style="left:350px;top:934px;width:97px">508.9230143</div>
<div class="t r" style="left:451px;top:934px;width:97px">67.38639378</div>
<div class="t r" style="left:47px;top:955px;width:97px">4193320</div>
<div class="t r" style="left:148px;top:955px;width:97px">76.11214837</div>
<div class="t r" style="left:249px;top:955px;width:97px">503.1993396</div>
<div class="t r" style="left:350px;top:955px;width:97px">508.9230143</div>
<div class="t r" style="left:451px;top:955px;width:97px">67.38639378</div>
<div class="t r" style="left:47px;top:976px;width:97px">4290780</div>
<div class="t r" style="left:148px;top:976px;width:97px">76.11214837</div>
<div class="t r" style="left:249px;top:976px;width:97px">503.1993396</div>
<div class="t r" style="left:350px;top:976px;width:97px">508.9230143</div>
<div class="t r" style="left:451px;top:976px;width:97px">67.38639378</div>
<div class="t r" style="left:47px;top:997px;width:97px">4388240</div>
<div class="t r" style="left:148px;top:997px;width:97px">76.11214837</div>
<div class="t r" style="left:249px;top:997px;width:97px">503.1993396</div>
<div class="t r" style="left:350px;top:997px;width:97px">508.9230143</div>
<div class="t r" style="left:451px;top:997px;width:97px">67.38639378</div>
<div class="t r" style="left:47px;top:1018px;width:97px">4485700</div>
<div class="t r" style="left:148px;top:1018px;width:97px">76.11214837</div>
<div class="t r" style="left:249px;top:1018px;width:97px">503.1993396</div>
<div class="t r" style="left:350px;top:1018px;width:97px">508.9230143</div>
<div class="t r" style="left:451px;top:1018px;width:97px">67.38639378</div>
<div class="t r" style="left:47px;top:1039px;width:97px">4583160</div>
<div class="t r" style="left:148px;top:1039px;width:97px">76.11214837</div>
<div class="t r" style="left:249px;top:1039px;width:97px">503.1993396</div>
<div class="t r" style="left:350px;top:1039px;width:97px">508.9230143</div>
<div class="t r" style="left:451px;top:1039px;width:97px">67.38639378</div>
<div class="t r" style="left:47px;top:1060px;width:97px">4680620</div>
<div class="t r" style="left:148px;top:1060px;width:97px">193.5785256</div>
<div class="t r" style="left:249px;top:1060px;width:97px">692.1679411</div>
<div class="t r" style="left:350px;top:1060px;width:97px">661.791982</div>
<div class="t r" style="left:451px;top:1060px;width:97px">44.92838479</div>
<div class="t r" style="left:47px;top:1081px;width:97px">4778080</div>
<div class="t r" style="left:148px;top:1081px;width:97px">2617.427598</div>
<div class="t r" style="left:249px;top:1081px;width:97px">458.6118254</div>
<div class="t r" style="left:350px;top:1081px;width:97px">2576.936636</div>
<div class="t r" style="left:451px;top:1081px;width:97px">50.7408359</div>
<div class="t r" style="left:47px;top:1102px;width:97px">4875540</div>
<div class="t r" style="left:148px;top:1102px;width:97px">76.11214837</div>
<div class="t r" style="left:249px;top:1102px;width:97px">503.1993396</div>
<div class="t r" style="left:350px;top:1102px;width:97px">508.9230143</div>
<div class="t r" style="left:451px;top:1102px;width:97px">67.38639378</div>
<div class="t r" style="left:47px;top:1123px;width:97px">4973000</div>
<div class="t r" style="left:148px;top:1123px;width:97px">76.11214837</div>
<div class="t r" style="left:249px;top:1123px;width:97px">503.1993396</div>
<div class="t r" style="left:350px;top:1123px;width:97px">508.9230143</div>
<div class="t r" style="left:451px;top:1123px;width:97px">67.38639378</div>
<div class="a" style="left:148px;top:52px;width:403px;height:20px;background:#ebf1fc"></div>
<div class="t" style="left:50px;top:52px">ruby 2.0.0p645 (2015-04-13 revision 50299) [universal.x86_64-darwin15]</div>
<div class="a" style="left:47px;top:51px;width:505px;height:1px;background:#4d90fe"></div>
<div class="a" style="left:551px;top:51px;width:1px;height:1063px;background:#4d90fe"></div>
<div class="a" style="left:47px;top:51px;width:102px;height:22px;border:2px solid #4d90fe;box-sizing:border-box"></div>
<div class="a" style="left:555px;top:1105px;width:34px;height:12px;background:#f3f3f3;border:1px solid #d3d3d3;box-sizing:border-box;border-top-color:#d0d0d0"></div>
<svg class="a" style="left:555px;top:1105px" width="34" height="9" viewBox="0 0 34 9"><circle cx="14.5" cy="5.2" r="1.3" fill="none" stroke="#444" stroke-width="1.2"/><rect x="11.5" y="6.3" width="6.2" height="1.6" rx="0.6" fill="#444"/><rect x="9" y="6.5" width="1.2" height="3" fill="#444"/><rect x="19" y="6.5" width="1.2" height="3" fill="#444"/><rect x="10.2" y="8" width="8.8" height="2" fill="#fff"/></svg>
<div class="a" style="left:1px;top:52px;width:1px;height:1062px;background:#ebebeb"></div>
<div class="a" style="left:0;top:0;width:1px;height:1114px;background:#111"></div>
<div class="a" style="left:683px;top:44px;width:1288px;height:797px;background:#fff;border:1px solid #959595;box-sizing:border-box"></div>
<svg class="a" style="left:0;top:0" width="1985" height="1114" viewBox="0 0 1985 1114">
<defs><clipPath id="cpR"><rect x="929" y="197" width="797" height="491"/></clipPath></defs>
<rect x="930" y="197" width="795" height="1" fill="#ccc"/>
<rect x="930" y="295" width="795" height="1" fill="#ccc"/>
<rect x="930" y="393" width="795" height="1" fill="#ccc"/>
<rect x="930" y="491" width="795" height="1" fill="#ccc"/>
<rect x="930" y="589" width="795" height="1" fill="#ccc"/>
<rect x="1008.2" y="197" width="1" height="490" fill="#ccc"/>
<rect x="1167.1" y="197" width="1" height="490" fill="#ccc"/>
<rect x="1326.0" y="197" width="1" height="490" fill="#ccc"/>
<rect x="1484.9" y="197" width="1" height="490" fill="#ccc"/>
<rect x="1643.8" y="197" width="1" height="490" fill="#ccc"/>
<rect x="930" y="686.5" width="795" height="1.5" fill="#333"/>
<g clip-path="url(#cpR)" fill="none" stroke-width="2" stroke-linejoin="round">
<path d="M930.8,671.1 L932.3,628.9 L933.9,649.7 L935.4,649.7 L937.0,649.7 L938.5,649.7 L940.1,649.7 L941.6,649.7 L943.2,649.7 L944.7,596.7 L946.3,649.7 L947.8,649.7 L949.4,668.5 L950.9,649.7 L952.5,649.7 L954.0,649.7 L955.6,649.7 L957.1,675.0 L958.7,623.6 L960.2,649.7 L961.8,649.7 L963.3,649.7 L964.9,649.7 L966.4,649.7 L968.0,649.7 L969.5,649.7 L971.1,649.7 L972.6,666.9 L974.2,393.0 L975.7,649.3 L977.3,627.7 L978.8,626.2 L980.4,340.6 L981.9,540.0 L983.5,626.2 L985.0,649.7 L986.6,649.7 L988.1,649.7 L989.7,649.7 L991.2,649.7 L992.7,657.6 L994.3,649.8 L995.8,649.8 L997.4,393.0 L998.9,668.1 L1000.5,642.9 L1002.0,638.0 L1003.6,592.1 L1005.1,-595.3 L1006.7,649.8 L1008.2,442.0 L1009.8,633.1 L1011.3,645.4 L1012.9,657.6 L1014.4,666.4 L1016.0,603.7 L1017.5,341.1 L1019.1,197.0 L1020.6,669.0 L1022.2,669.0 L1023.7,669.0 L1025.3,669.0 L1026.8,669.0 L1028.4,669.0 L1029.9,662.0 L1031.5,669.5 L1033.0,676.9 L1034.6,670.3 L1036.1,669.7 L1037.7,669.0 L1039.2,659.3 L1040.8,667.8 L1042.3,676.3 L1043.9,671.3 L1045.4,670.0 L1047.0,668.7 L1048.5,668.9 L1050.0,669.0 L1051.6,670.8 L1053.1,670.1 L1054.7,669.4 L1056.2,670.3 L1057.8,668.7 L1059.3,677.8 L1060.9,678.0 L1062.4,678.2 L1064.0,672.0 L1065.5,677.4 L1067.1,679.1 L1068.6,680.8 L1070.2,675.0 L1071.7,674.3 L1073.3,669.0 L1074.8,681.1 L1076.4,677.9 L1077.9,674.7 L1079.5,671.4 L1081.0,675.3 L1082.6,679.2 L1084.1,677.2 L1085.7,681.1 L1087.2,674.3 L1088.8,678.7 L1090.3,679.4 L1091.9,680.2 L1093.4,677.4 L1095.0,679.0 L1096.5,679.2 L1098.1,680.4 L1099.6,681.7 L1101.2,678.7 L1102.7,678.7 L1104.3,678.7 L1105.8,678.7 L1107.4,682.2 L1108.9,680.5 L1110.4,678.7 L1112.0,680.5 L1113.5,682.2 L1115.1,681.1 L1116.6,679.9 L1118.2,678.7 L1119.7,680.5 L1121.3,682.2 L1122.8,680.0 L1124.4,677.8 L1125.9,681.6 L1127.5,682.3 L1129.0,683.1 L1130.6,683.8 L1132.1,681.6 L1133.7,681.9 L1135.2,680.7 L1136.8,684.2 L1138.3,680.1 L1139.9,683.2 L1141.4,685.2 L1143.0,683.8 L1144.5,684.8 L1146.1,681.0 L1147.6,682.2 L1149.2,683.4 L1150.7,685.0 L1152.3,684.3 L1153.8,683.1 L1155.4,682.3 L1156.9,683.8 L1158.5,681.7 L1160.0,682.4 L1161.6,680.9 L1163.1,683.8 L1164.7,684.6 L1166.2,681.5 L1167.8,682.9 L1169.3,682.0 L1170.8,682.5 L1172.4,683.8 L1173.9,682.5 L1175.5,683.1 L1177.0,680.9 L1178.6,682.3 L1180.1,682.1 L1181.7,680.9 L1183.2,684.0 L1184.8,682.4 L1186.3,683.3 L1187.9,684.8 L1189.4,682.1 L1191.0,684.3 L1192.5,681.7 L1194.1,683.5 L1195.6,681.8 L1197.2,681.9 L1198.7,683.7 L1200.3,681.9 L1201.8,684.8 L1203.4,684.5 L1204.9,683.5 L1206.5,684.4 L1208.0,683.8 L1209.6,683.3 L1211.1,682.9 L1212.7,683.2 L1214.2,685.3 L1215.8,682.6 L1217.3,682.5 L1218.9,684.0 L1220.4,683.2 L1222.0,685.3 L1223.5,685.0 L1225.1,685.4 L1226.6,685.0 L1228.2,684.3 L1229.7,682.4 L1231.2,685.1 L1232.8,684.4 L1234.3,685.2 L1235.9,682.1 L1237.4,683.9 L1239.0,685.3 L1240.5,684.7 L1242.1,685.1 L1243.6,682.4 L1245.2,685.2 L1246.7,685.6 L1248.3,682.3 L1249.8,683.3 L1251.4,684.5 L1252.9,683.1 L1254.5,683.1 L1256.0,685.0 L1257.6,682.4 L1259.1,683.1 L1260.7,683.3 L1262.2,684.1 L1263.8,685.7 L1265.3,684.9 L1266.9,683.5 L1268.4,684.4 L1270.0,682.6 L1271.5,684.7 L1273.1,685.1 L1274.6,685.2 L1276.2,683.0 L1277.7,684.3 L1279.3,683.4 L1280.8,683.8 L1282.4,683.5 L1283.9,684.4 L1285.5,683.5 L1287.0,683.5 L1288.5,684.7 L1290.1,683.1 L1291.6,685.4 L1293.2,685.5 L1294.7,683.5 L1296.3,683.5 L1297.8,684.0 L1299.4,684.4 L1300.9,686.0 L1302.5,684.1 L1304.0,683.3 L1305.6,683.5 L1307.1,685.4 L1308.7,685.2 L1310.2,684.4 L1311.8,684.9 L1313.3,683.5 L1314.9,684.8 L1316.4,683.5 L1318.0,683.5 L1319.5,684.6 L1321.1,686.1 L1322.6,685.6 L1324.2,683.9 L1325.7,684.9 L1327.3,684.6 L1328.8,684.8 L1330.4,684.0 L1331.9,684.7 L1333.5,685.5 L1335.0,684.8 L1336.6,684.2 L1338.1,685.0 L1339.7,684.9 L1341.2,684.4 L1342.8,684.8 L1344.3,683.8 L1345.9,683.9 L1347.4,685.6 L1348.9,683.8 L1350.5,685.9 L1352.0,685.2 L1353.6,685.7 L1355.1,684.6 L1356.7,684.0 L1358.2,684.5 L1359.8,686.0 L1361.3,683.9 L1362.9,683.9 L1364.4,685.1 L1366.0,684.3 L1367.5,685.3 L1369.1,685.5 L1370.6,685.6 L1372.2,686.4 L1373.7,685.3 L1375.3,685.6 L1376.8,685.2 L1378.4,684.0 L1379.9,684.0 L1381.5,685.8 L1383.0,684.6 L1384.6,686.2 L1386.1,684.3 L1387.7,685.9 L1389.2,684.3 L1390.8,684.8 L1392.3,686.4 L1393.9,685.5 L1395.4,684.3 L1397.0,684.6 L1398.5,684.5 L1400.1,684.5 L1401.6,685.8 L1403.2,684.4 L1404.7,686.3 L1406.3,686.0 L1407.8,686.2 L1409.3,686.1 L1410.9,685.9 L1412.4,686.0 L1414.0,686.2 L1415.5,686.6 L1417.1,686.6 L1418.6,685.4 L1420.2,685.6 L1421.7,686.4 L1423.3,685.7 L1424.8,684.8 L1426.4,685.6 L1427.9,684.5 L1429.5,684.9 L1431.0,685.3 L1432.6,686.0 L1434.1,686.4 L1435.7,685.1 L1437.2,686.4 L1438.8,684.9 L1440.3,685.3 L1441.9,686.2 L1443.4,685.8 L1445.0,685.8 L1446.5,684.8 L1448.1,685.7 L1449.6,684.8 L1451.2,686.1 L1452.7,686.0 L1454.3,685.8 L1455.8,685.8 L1457.4,686.3 L1458.9,686.0 L1460.5,686.8 L1462.0,686.4 L1463.6,685.8 L1465.1,685.6 L1466.7,685.1 L1468.2,686.3 L1469.7,686.6 L1471.3,685.6 L1472.8,685.3 L1474.4,685.7 L1475.9,685.3 L1477.5,685.9 L1479.0,685.3 L1480.6,685.3 L1482.1,685.2 L1483.7,685.6 L1485.2,686.9 L1486.8,686.2 L1488.3,685.3 L1489.9,685.7 L1491.4,685.6 L1493.0,686.9 L1494.5,685.5 L1496.1,685.9 L1497.6,686.8 L1499.2,686.5 L1500.7,686.5 L1502.3,686.6 L1503.8,685.1 L1505.4,686.2 L1506.9,685.7 L1508.5,685.8 L1510.0,686.8 L1511.6,686.5 L1513.1,686.4 L1514.7,687.0 L1516.2,686.5 L1517.8,685.7 L1519.3,686.4 L1520.9,686.1 L1522.4,686.8 L1524.0,686.6 L1525.5,685.3 L1527.0,686.2 L1528.6,685.2 L1530.1,686.5 L1531.7,685.3 L1533.2,685.9 L1534.8,686.1 L1536.3,686.8 L1537.9,686.1 L1539.4,685.7 L1541.0,685.4 L1542.5,687.0 L1544.1,686.1 L1545.6,686.5 L1547.2,686.4 L1548.7,685.5 L1550.3,685.7 L1551.8,686.8 L1553.4,685.8 L1554.9,686.5 L1556.5,686.3 L1558.0,686.0 L1559.6,686.3 L1561.1,687.0 L1562.7,685.6 L1564.2,685.4 L1565.8,686.6 L1567.3,686.7 L1568.9,685.4 L1570.4,685.6 L1572.0,685.5 L1573.5,686.1 L1575.1,687.0 L1576.6,686.3 L1578.2,686.0 L1579.7,687.0 L1581.3,686.9 L1582.8,686.5 L1584.4,685.8 L1585.9,686.7 L1587.4,686.6 L1589.0,686.4 L1590.5,686.8 L1592.1,685.6 L1593.6,686.7 L1595.2,685.4 L1596.7,686.9 L1598.3,687.0 L1599.8,687.0 L1601.4,686.7 L1602.9,685.6 L1604.5,686.4 L1606.0,686.2 L1607.6,686.6 L1609.1,686.7 L1610.7,686.9 L1612.2,686.1 L1613.8,686.8 L1615.3,686.7 L1616.9,686.4 L1618.4,685.7 L1620.0,687.0 L1621.5,686.0 L1623.1,686.4 L1624.6,687.0 L1626.2,685.6 L1627.7,685.8 L1629.3,686.8 L1630.8,686.9 L1632.4,686.1 L1633.9,686.0 L1635.5,685.9 L1637.0,686.3 L1638.6,685.9 L1640.1,685.7 L1641.7,686.7 L1643.2,686.8 L1644.8,686.1 L1646.3,687.0 L1647.8,686.3 L1649.4,686.9 L1650.9,687.0 L1652.5,686.5 L1654.0,686.2 L1655.6,686.5 L1657.1,686.8 L1658.7,686.1 L1660.2,687.0 L1661.8,686.2 L1663.3,686.8 L1664.9,685.8 L1666.4,687.0 L1668.0,686.6 L1669.5,686.9 L1671.1,686.1 L1672.6,686.9 L1674.2,686.8 L1675.7,686.9 L1677.3,686.1 L1678.8,685.8 L1680.4,687.0 L1681.9,686.6 L1683.5,685.8 L1685.0,686.7 L1686.6,685.8 L1688.1,687.0 L1689.7,686.7 L1691.2,685.9 L1692.8,685.8 L1694.3,686.8 L1695.9,685.9 L1697.4,687.0 L1699.0,686.7 L1700.5,686.8 L1702.1,687.0 L1703.6,686.8 L1705.2,687.0 L1706.7,687.0 L1708.2,686.1 L1709.8,686.7 L1711.3,686.6 L1712.9,685.9 L1714.4,686.8 L1716.0,687.0 L1717.5,686.1 L1719.1,687.0 L1720.6,687.0 L1722.2,687.0 L1723.7,686.0" stroke="#3366cc"/>
<path d="M930.8,553.4 L932.3,354.0 L933.9,440.4 L935.4,440.4 L937.0,440.4 L938.5,440.4 L940.1,440.4 L941.6,440.4 L943.2,440.4 L944.7,339.7 L946.3,440.4 L947.8,440.4 L949.4,511.4 L950.9,440.4 L952.5,440.4 L954.0,440.4 L955.6,440.4 L957.1,513.0 L958.7,336.3 L960.2,440.4 L961.8,440.4 L963.3,440.4 L964.9,440.4 L966.4,440.4 L968.0,440.4 L969.5,440.4 L971.1,440.4 L972.6,487.6 L974.2,99.0 L975.7,453.8 L977.3,103.9 L978.8,397.9 L980.4,344.0 L981.9,74.5 L983.5,445.4 L985.0,440.4 L986.6,440.4 L988.1,440.4 L989.7,440.4 L991.2,440.4 L992.7,488.6 L994.3,440.5 L995.8,440.5 L997.4,148.0 L998.9,517.5 L1000.5,495.4 L1002.0,373.4 L1003.6,362.6 L1005.1,462.3 L1006.7,440.5 L1008.2,148.0 L1009.8,397.9 L1011.3,412.6 L1012.9,495.9 L1014.4,443.0 L1016.0,393.0 L1017.5,341.1 L1019.1,461.6 L1020.6,517.5 L1022.2,517.5 L1023.7,516.7 L1025.3,516.7 L1026.8,516.7 L1028.4,516.7 L1029.9,516.0 L1031.5,513.4 L1033.0,566.6 L1034.6,542.1 L1036.1,516.9 L1037.7,503.4 L1039.2,491.0 L1040.8,524.5 L1042.3,558.2 L1043.9,544.4 L1045.4,530.2 L1047.0,516.0 L1048.5,516.0 L1050.0,516.0 L1051.6,536.5 L1053.1,527.7 L1054.7,518.9 L1056.2,536.0 L1057.8,518.4 L1059.3,574.2 L1060.9,574.2 L1062.4,567.3 L1064.0,561.0 L1065.5,572.7 L1067.1,570.4 L1068.6,568.1 L1070.2,579.1 L1071.7,564.3 L1073.3,550.0 L1074.8,579.4 L1076.4,573.2 L1077.9,567.1 L1079.5,561.1 L1081.0,575.2 L1082.6,589.3 L1084.1,575.7 L1085.7,571.3 L1087.2,567.6 L1088.8,579.8 L1090.3,592.2 L1091.9,591.2 L1093.4,590.5 L1095.0,589.3 L1096.5,586.0 L1098.1,582.7 L1099.6,579.3 L1101.2,592.3 L1102.7,590.8 L1104.3,589.4 L1105.8,597.1 L1107.4,604.5 L1108.9,600.5 L1110.4,596.5 L1112.0,592.2 L1113.5,599.4 L1115.1,596.1 L1116.6,596.8 L1118.2,598.6 L1119.7,592.9 L1121.3,600.3 L1122.8,595.3 L1124.4,598.5 L1125.9,604.2 L1127.5,601.0 L1129.0,608.9 L1130.6,605.7 L1132.1,610.5 L1133.7,610.5 L1135.2,607.1 L1136.8,610.8 L1138.3,605.5 L1139.9,606.3 L1141.4,602.0 L1143.0,603.7 L1144.5,612.0 L1146.1,610.6 L1147.6,612.3 L1149.2,607.5 L1150.7,608.9 L1152.3,614.7 L1153.8,608.4 L1155.4,612.9 L1156.9,611.7 L1158.5,608.6 L1160.0,614.9 L1161.6,612.5 L1163.1,610.6 L1164.7,608.4 L1166.2,614.9 L1167.8,618.0 L1169.3,619.7 L1170.8,612.7 L1172.4,612.0 L1173.9,614.3 L1175.5,615.9 L1177.0,613.9 L1178.6,617.8 L1180.1,622.3 L1181.7,617.2 L1183.2,615.5 L1184.8,619.8 L1186.3,623.2 L1187.9,621.9 L1189.4,623.1 L1191.0,622.5 L1192.5,620.4 L1194.1,623.1 L1195.6,619.2 L1197.2,616.8 L1198.7,621.3 L1200.3,620.8 L1201.8,615.6 L1203.4,622.1 L1204.9,621.6 L1206.5,619.4 L1208.0,624.9 L1209.6,622.8 L1211.1,618.6 L1212.7,622.3 L1214.2,621.3 L1215.8,620.0 L1217.3,620.5 L1218.9,624.4 L1220.4,626.9 L1222.0,627.4 L1223.5,626.8 L1225.1,626.2 L1226.6,628.9 L1228.2,628.6 L1229.7,629.6 L1231.2,625.7 L1232.8,628.3 L1234.3,627.7 L1235.9,625.0 L1237.4,627.5 L1239.0,630.0 L1240.5,628.6 L1242.1,625.8 L1243.6,631.1 L1245.2,628.1 L1246.7,628.0 L1248.3,628.4 L1249.8,626.5 L1251.4,629.9 L1252.9,630.6 L1254.5,628.6 L1256.0,629.7 L1257.6,627.3 L1259.1,627.2 L1260.7,627.5 L1262.2,630.7 L1263.8,630.2 L1265.3,632.0 L1266.9,631.2 L1268.4,627.9 L1270.0,628.4 L1271.5,628.4 L1273.1,632.1 L1274.6,632.4 L1276.2,630.7 L1277.7,629.8 L1279.3,631.0 L1280.8,633.9 L1282.4,630.2 L1283.9,631.1 L1285.5,634.1 L1287.0,633.6 L1288.5,630.8 L1290.1,633.7 L1291.6,632.2 L1293.2,635.1 L1294.7,631.7 L1296.3,635.3 L1297.8,631.6 L1299.4,634.5 L1300.9,635.6 L1302.5,632.0 L1304.0,634.2 L1305.6,634.7 L1307.1,633.0 L1308.7,635.6 L1310.2,635.8 L1311.8,635.8 L1313.3,636.6 L1314.9,635.6 L1316.4,634.8 L1318.0,635.7 L1319.5,635.4 L1321.1,635.3 L1322.6,635.8 L1324.2,637.9 L1325.7,637.2 L1327.3,635.0 L1328.8,636.7 L1330.4,635.9 L1331.9,637.8 L1333.5,637.3 L1335.0,635.2 L1336.6,636.2 L1338.1,634.9 L1339.7,636.2 L1341.2,636.7 L1342.8,637.0 L1344.3,637.1 L1345.9,636.3 L1347.4,635.3 L1348.9,637.0 L1350.5,635.9 L1352.0,638.9 L1353.6,639.1 L1355.1,639.3 L1356.7,636.6 L1358.2,639.1 L1359.8,637.2 L1361.3,636.5 L1362.9,639.2 L1364.4,638.5 L1366.0,636.4 L1367.5,639.6 L1369.1,638.4 L1370.6,639.7 L1372.2,637.8 L1373.7,638.5 L1375.3,640.6 L1376.8,638.5 L1378.4,640.7 L1379.9,638.2 L1381.5,640.7 L1383.0,641.1 L1384.6,640.3 L1386.1,639.9 L1387.7,638.5 L1389.2,641.1 L1390.8,639.6 L1392.3,641.4 L1393.9,639.4 L1395.4,641.7 L1397.0,639.8 L1398.5,641.9 L1400.1,642.0 L1401.6,640.7 L1403.2,640.5 L1404.7,641.5 L1406.3,640.7 L1407.8,642.2 L1409.3,642.4 L1410.9,641.7 L1412.4,640.3 L1414.0,641.2 L1415.5,641.8 L1417.1,642.2 L1418.6,640.7 L1420.2,642.5 L1421.7,640.3 L1423.3,640.7 L1424.8,641.9 L1426.4,642.2 L1427.9,641.5 L1429.5,642.6 L1431.0,641.5 L1432.6,642.5 L1434.1,643.6 L1435.7,643.7 L1437.2,643.2 L1438.8,643.8 L1440.3,641.6 L1441.9,643.4 L1443.4,643.5 L1445.0,644.0 L1446.5,643.9 L1448.1,642.1 L1449.6,644.2 L1451.2,644.1 L1452.7,645.1 L1454.3,644.0 L1455.8,644.8 L1457.4,645.5 L1458.9,645.4 L1460.5,645.6 L1462.0,645.1 L1463.6,644.6 L1465.1,644.3 L1466.7,644.6 L1468.2,645.5 L1469.7,644.2 L1471.3,645.0 L1472.8,646.7 L1474.4,644.9 L1475.9,645.4 L1477.5,646.9 L1479.0,646.3 L1480.6,645.7 L1482.1,646.4 L1483.7,646.3 L1485.2,647.4 L1486.8,647.7 L1488.3,647.9 L1489.9,647.0 L1491.4,647.0 L1493.0,647.3 L1494.5,646.8 L1496.1,647.5 L1497.6,647.3 L1499.2,647.2 L1500.7,648.6 L1502.3,647.5 L1503.8,647.6 L1505.4,648.1 L1506.9,648.3 L1508.5,647.8 L1510.0,648.1 L1511.6,649.2 L1513.1,648.1 L1514.7,648.5 L1516.2,649.6 L1517.8,648.6 L1519.3,648.6 L1520.9,649.0 L1522.4,649.2 L1524.0,648.5 L1525.5,648.5 L1527.0,650.4 L1528.6,649.0 L1530.1,649.7 L1531.7,650.3 L1533.2,650.4 L1534.8,650.6 L1536.3,649.2 L1537.9,649.5 L1539.4,649.5 L1541.0,650.8 L1542.5,650.5 L1544.1,651.5 L1545.6,650.8 L1547.2,651.4 L1548.7,651.3 L1550.3,651.9 L1551.8,650.5 L1553.4,650.5 L1554.9,650.6 L1556.5,651.7 L1558.0,650.7 L1559.6,651.9 L1561.1,652.2 L1562.7,652.6 L1564.2,652.4 L1565.8,652.6 L1567.3,652.2 L1568.9,652.6 L1570.4,651.9 L1572.0,652.4 L1573.5,652.0 L1575.1,652.5 L1576.6,652.6 L1578.2,652.6 L1579.7,653.5 L1581.3,652.6 L1582.8,653.4 L1584.4,653.9 L1585.9,652.8 L1587.4,653.5 L1589.0,653.8 L1590.5,654.5 L1592.1,654.6 L1593.6,654.2 L1595.2,653.7 L1596.7,654.5 L1598.3,655.0 L1599.8,654.9 L1601.4,655.2 L1602.9,654.8 L1604.5,654.6 L1606.0,655.3 L1607.6,655.5 L1609.1,656.1 L1610.7,654.8 L1612.2,655.7 L1613.8,655.3 L1615.3,656.3 L1616.9,656.2 L1618.4,655.5 L1620.0,655.8 L1621.5,657.2 L1623.1,656.0 L1624.6,656.6 L1626.2,657.1 L1627.7,656.5 L1629.3,656.4 L1630.8,657.9 L1632.4,657.4 L1633.9,656.9 L1635.5,657.5 L1637.0,657.9 L1638.6,658.6 L1640.1,658.5 L1641.7,658.0 L1643.2,658.9 L1644.8,658.2 L1646.3,659.1 L1647.8,658.6 L1649.4,658.9 L1650.9,658.7 L1652.5,659.2 L1654.0,658.4 L1655.6,658.6 L1657.1,659.6 L1658.7,658.7 L1660.2,659.7 L1661.8,659.6 L1663.3,659.7 L1664.9,659.5 L1666.4,660.2 L1668.0,660.2 L1669.5,659.8 L1671.1,659.7 L1672.6,660.2 L1674.2,659.7 L1675.7,660.0 L1677.3,660.9 L1678.8,660.9 L1680.4,660.7 L1681.9,661.2 L1683.5,660.7 L1685.0,661.5 L1686.6,661.5 L1688.1,661.7 L1689.7,661.9 L1691.2,660.9 L1692.8,661.3 L1694.3,661.1 L1695.9,662.2 L1697.4,661.5 L1699.0,661.7 L1700.5,662.2 L1702.1,662.6 L1703.6,662.6 L1705.2,661.9 L1706.7,662.0 L1708.2,662.9 L1709.8,662.5 L1711.3,663.6 L1712.9,663.3 L1714.4,663.7 L1716.0,662.9 L1717.5,663.7 L1719.1,663.4 L1720.6,664.4 L1722.2,663.5 L1723.7,663.8" stroke="#dc3912"/>
<path d="M930.8,552.5 L932.3,349.0 L933.9,437.6 L935.4,437.6 L937.0,437.6 L938.5,437.6 L940.1,437.6 L941.6,437.6 L943.2,437.6 L944.7,328.2 L946.3,437.6 L947.8,437.6 L949.4,510.4 L950.9,437.6 L952.5,437.6 L954.0,437.6 L955.6,437.6 L957.1,512.5 L958.7,330.6 L960.2,437.6 L961.8,437.6 L963.3,437.6 L964.9,437.6 L966.4,437.6 L968.0,437.6 L969.5,437.6 L971.1,437.6 L972.6,486.6 L974.2,1.0 L975.7,450.8 L977.3,99.0 L978.8,393.0 L980.4,199.4 L981.9,50.0 L983.5,437.6 L985.0,437.6 L986.6,437.6 L988.1,437.6 L989.7,437.6 L991.2,437.6 L992.7,486.1 L994.3,437.6 L995.8,437.6 L997.4,50.0 L998.9,515.5 L1000.5,490.5 L1002.0,368.5 L1003.6,347.9 L1005.1,-575.7 L1006.7,437.6 L1008.2,99.0 L1009.8,393.0 L1011.3,393.0 L1012.9,493.5 L1014.4,442.0 L1016.0,381.2 L1017.5,198.0 L1019.1,148.0 L1020.6,515.5 L1022.2,515.5 L1023.7,515.8 L1025.3,515.8 L1026.8,515.8 L1028.4,515.8 L1029.9,514.2 L1031.5,512.6 L1033.0,566.2 L1034.6,541.1 L1036.1,516.0 L1037.7,502.5 L1039.2,489.0 L1040.8,523.4 L1042.3,557.8 L1043.9,543.5 L1045.4,529.3 L1047.0,515.0 L1048.5,515.0 L1050.0,515.0 L1051.6,535.6 L1053.1,526.8 L1054.7,518.0 L1056.2,535.1 L1057.8,517.5 L1059.3,573.8 L1060.9,573.8 L1062.4,567.0 L1064.0,560.1 L1065.5,572.3 L1067.1,570.1 L1068.6,567.9 L1070.2,578.4 L1071.7,563.6 L1073.3,548.8 L1074.8,579.2 L1076.4,572.8 L1077.9,566.5 L1079.5,560.1 L1081.0,574.5 L1082.6,589.0 L1084.1,575.3 L1085.7,571.1 L1087.2,567.0 L1088.8,579.4 L1090.3,591.9 L1091.9,591.0 L1093.4,590.0 L1095.0,589.0 L1096.5,585.7 L1098.1,582.5 L1099.6,579.2 L1101.2,591.9 L1102.7,590.5 L1104.3,589.0 L1105.8,596.7 L1107.4,604.4 L1108.9,600.2 L1110.4,596.1 L1112.0,591.9 L1113.5,599.3 L1115.1,595.9 L1116.6,596.5 L1118.2,598.2 L1119.7,592.6 L1121.3,600.2 L1122.8,595.0 L1124.4,598.0 L1125.9,604.0 L1127.5,600.9 L1129.0,608.8 L1130.6,605.6 L1132.1,610.3 L1133.7,610.4 L1135.2,606.8 L1136.8,610.7 L1138.3,605.2 L1139.9,606.2 L1141.4,601.9 L1143.0,603.6 L1144.5,612.0 L1146.1,610.4 L1147.6,612.1 L1149.2,607.4 L1150.7,608.8 L1152.3,614.7 L1153.8,608.3 L1155.4,612.7 L1156.9,611.7 L1158.5,608.4 L1160.0,614.8 L1161.6,612.2 L1163.1,610.5 L1164.7,608.4 L1166.2,614.7 L1167.8,617.9 L1169.3,619.5 L1170.8,612.5 L1172.4,611.9 L1173.9,614.2 L1175.5,615.8 L1177.0,613.7 L1178.6,617.7 L1180.1,622.1 L1181.7,616.9 L1183.2,615.5 L1184.8,619.7 L1186.3,623.1 L1187.9,621.9 L1189.4,623.0 L1191.0,622.4 L1192.5,620.2 L1194.1,623.0 L1195.6,619.0 L1197.2,616.6 L1198.7,621.3 L1200.3,620.6 L1201.8,615.6 L1203.4,622.0 L1204.9,621.6 L1206.5,619.4 L1208.0,624.8 L1209.6,622.6 L1211.1,618.5 L1212.7,622.2 L1214.2,621.3 L1215.8,619.9 L1217.3,620.4 L1218.9,624.3 L1220.4,626.8 L1222.0,627.4 L1223.5,626.7 L1225.1,626.2 L1226.6,628.9 L1228.2,628.5 L1229.7,629.4 L1231.2,625.6 L1232.8,628.2 L1234.3,627.7 L1235.9,624.8 L1237.4,627.4 L1239.0,630.0 L1240.5,628.6 L1242.1,625.8 L1243.6,630.9 L1245.2,628.0 L1246.7,628.0 L1248.3,628.2 L1249.8,626.4 L1251.4,629.9 L1252.9,630.4 L1254.5,628.5 L1256.0,629.7 L1257.6,627.2 L1259.1,627.1 L1260.7,627.4 L1262.2,630.6 L1263.8,630.2 L1265.3,632.0 L1266.9,631.1 L1268.4,627.9 L1270.0,628.2 L1271.5,628.3 L1273.1,632.1 L1274.6,632.4 L1276.2,630.6 L1277.7,629.8 L1279.3,630.9 L1280.8,633.8 L1282.4,630.1 L1283.9,631.1 L1285.5,634.0 L1287.0,633.5 L1288.5,630.7 L1290.1,633.6 L1291.6,632.2 L1293.2,635.1 L1294.7,631.6 L1296.3,635.2 L1297.8,631.5 L1299.4,634.5 L1300.9,635.6 L1302.5,631.9 L1304.0,634.0 L1305.6,634.6 L1307.1,632.9 L1308.7,635.6 L1310.2,635.8 L1311.8,635.8 L1313.3,636.5 L1314.9,635.6 L1316.4,634.7 L1318.0,635.5 L1319.5,635.3 L1321.1,635.3 L1322.6,635.8 L1324.2,637.8 L1325.7,637.2 L1327.3,634.9 L1328.8,636.7 L1330.4,635.8 L1331.9,637.8 L1333.5,637.3 L1335.0,635.2 L1336.6,636.2 L1338.1,634.8 L1339.7,636.1 L1341.2,636.6 L1342.8,637.0 L1344.3,637.0 L1345.9,636.2 L1347.4,635.3 L1348.9,636.9 L1350.5,635.9 L1352.0,638.8 L1353.6,639.1 L1355.1,639.2 L1356.7,636.5 L1358.2,639.0 L1359.8,637.2 L1361.3,636.4 L1362.9,639.1 L1364.4,638.5 L1366.0,636.3 L1367.5,639.6 L1369.1,638.3 L1370.6,639.6 L1372.2,637.8 L1373.7,638.5 L1375.3,640.6 L1376.8,638.5 L1378.4,640.6 L1379.9,638.1 L1381.5,640.7 L1383.0,641.0 L1384.6,640.3 L1386.1,639.8 L1387.7,638.5 L1389.2,641.0 L1390.8,639.6 L1392.3,641.4 L1393.9,639.4 L1395.4,641.6 L1397.0,639.8 L1398.5,641.8 L1400.1,641.9 L1401.6,640.7 L1403.2,640.4 L1404.7,641.5 L1406.3,640.7 L1407.8,642.2 L1409.3,642.4 L1410.9,641.7 L1412.4,640.3 L1414.0,641.2 L1415.5,641.8 L1417.1,642.2 L1418.6,640.7 L1420.2,642.5 L1421.7,640.3 L1423.3,640.7 L1424.8,641.8 L1426.4,642.2 L1427.9,641.4 L1429.5,642.5 L1431.0,641.5 L1432.6,642.5 L1434.1,643.6 L1435.7,643.6 L1437.2,643.2 L1438.8,643.7 L1440.3,641.6 L1441.9,643.4 L1443.4,643.5 L1445.0,644.0 L1446.5,643.9 L1448.1,642.1 L1449.6,644.2 L1451.2,644.1 L1452.7,645.1 L1454.3,644.0 L1455.8,644.8 L1457.4,645.5 L1458.9,645.4 L1460.5,645.6 L1462.0,645.1 L1463.6,644.5 L1465.1,644.3 L1466.7,644.5 L1468.2,645.5 L1469.7,644.2 L1471.3,644.9 L1472.8,646.7 L1474.4,644.9 L1475.9,645.4 L1477.5,646.9 L1479.0,646.2 L1480.6,645.7 L1482.1,646.4 L1483.7,646.3 L1485.2,647.4 L1486.8,647.7 L1488.3,647.9 L1489.9,647.0 L1491.4,647.0 L1493.0,647.3 L1494.5,646.8 L1496.1,647.5 L1497.6,647.3 L1499.2,647.2 L1500.7,648.6 L1502.3,647.4 L1503.8,647.5 L1505.4,648.1 L1506.9,648.2 L1508.5,647.8 L1510.0,648.1 L1511.6,649.2 L1513.1,648.1 L1514.7,648.5 L1516.2,649.6 L1517.8,648.5 L1519.3,648.6 L1520.9,649.0 L1522.4,649.2 L1524.0,648.5 L1525.5,648.5 L1527.0,650.3 L1528.6,648.9 L1530.1,649.7 L1531.7,650.3 L1533.2,650.4 L1534.8,650.6 L1536.3,649.2 L1537.9,649.5 L1539.4,649.5 L1541.0,650.8 L1542.5,650.5 L1544.1,651.4 L1545.6,650.8 L1547.2,651.4 L1548.7,651.2 L1550.3,651.9 L1551.8,650.5 L1553.4,650.5 L1554.9,650.6 L1556.5,651.7 L1558.0,650.7 L1559.6,651.9 L1561.1,652.2 L1562.7,652.6 L1564.2,652.4 L1565.8,652.6 L1567.3,652.2 L1568.9,652.6 L1570.4,651.8 L1572.0,652.4 L1573.5,652.0 L1575.1,652.5 L1576.6,652.5 L1578.2,652.6 L1579.7,653.5 L1581.3,652.6 L1582.8,653.4 L1584.4,653.8 L1585.9,652.8 L1587.4,653.5 L1589.0,653.8 L1590.5,654.5 L1592.1,654.6 L1593.6,654.2 L1595.2,653.6 L1596.7,654.5 L1598.3,655.0 L1599.8,654.9 L1601.4,655.2 L1602.9,654.8 L1604.5,654.6 L1606.0,655.3 L1607.6,655.5 L1609.1,656.1 L1610.7,654.8 L1612.2,655.7 L1613.8,655.3 L1615.3,656.3 L1616.9,656.2 L1618.4,655.5 L1620.0,655.8 L1621.5,657.2 L1623.1,656.0 L1624.6,656.6 L1626.2,657.0 L1627.7,656.5 L1629.3,656.4 L1630.8,657.9 L1632.4,657.4 L1633.9,656.9 L1635.5,657.4 L1637.0,657.9 L1638.6,658.6 L1640.1,658.4 L1641.7,658.0 L1643.2,658.9 L1644.8,658.2 L1646.3,659.1 L1647.8,658.6 L1649.4,658.9 L1650.9,658.7 L1652.5,659.2 L1654.0,658.4 L1655.6,658.6 L1657.1,659.6 L1658.7,658.7 L1660.2,659.7 L1661.8,659.5 L1663.3,659.7 L1664.9,659.5 L1666.4,660.2 L1668.0,660.2 L1669.5,659.8 L1671.1,659.7 L1672.6,660.2 L1674.2,659.7 L1675.7,660.0 L1677.3,660.9 L1678.8,660.9 L1680.4,660.7 L1681.9,661.2 L1683.5,660.7 L1685.0,661.5 L1686.6,661.5 L1688.1,661.7 L1689.7,661.9 L1691.2,660.9 L1692.8,661.2 L1694.3,661.1 L1695.9,662.1 L1697.4,661.5 L1699.0,661.7 L1700.5,662.2 L1702.1,662.6 L1703.6,662.6 L1705.2,661.9 L1706.7,662.0 L1708.2,662.9 L1709.8,662.5 L1711.3,663.6 L1712.9,663.3 L1714.4,663.7 L1716.0,662.9 L1717.5,663.7 L1719.1,663.4 L1720.6,664.4 L1722.2,663.5 L1723.7,663.8" stroke="#ff9900"/>
</g>
<text x="914" y="203" font-family="'Liberation Sans', sans-serif" font-size="15.8" fill="#444" text-anchor="end">1000</text>
<text x="914" y="301" font-family="'Liberation Sans', sans-serif" font-size="15.8" fill="#444" text-anchor="end">800</text>
<text x="914" y="399" font-family="'Liberation Sans', sans-serif" font-size="15.8" fill="#444" text-anchor="end">600</text>
<text x="914" y="497" font-family="'Liberation Sans', sans-serif" font-size="15.8" fill="#444" text-anchor="end">400</text>
<text x="914" y="595" font-family="'Liberation Sans', sans-serif" font-size="15.8" fill="#444" text-anchor="end">200</text>
<text x="914" y="693" font-family="'Liberation Sans', sans-serif" font-size="15.8" fill="#444" text-anchor="end">0</text>
<text x="1008.7" y="711.7" font-family="'Liberation Sans', sans-serif" font-size="15.8" fill="#444" text-anchor="middle">5000000</text>
<text x="1167.6" y="711.7" font-family="'Liberation Sans', sans-serif" font-size="15.8" fill="#444" text-anchor="middle">15000000</text>
<text x="1326.5" y="711.7" font-family="'Liberation Sans', sans-serif" font-size="15.8" fill="#444" text-anchor="middle">25000000</text>
<text x="1485.4" y="711.7" font-family="'Liberation Sans', sans-serif" font-size="15.8" fill="#444" text-anchor="middle">35000000</text>
<text x="1644.3" y="711.7" font-family="'Liberation Sans', sans-serif" font-size="15.8" fill="#444" text-anchor="middle">45000000</text>
<text x="1327.5" y="782.6" font-family="'Liberation Sans', sans-serif" font-size="15.8" font-style="italic" fill="#222" text-anchor="middle">freq</text>
<text x="931" y="169" font-family="'Liberation Sans', sans-serif" font-size="15.8" font-weight="bold" fill="#000">r<tspan dx="15">x</tspan><tspan dx="16.5">z</tspan><tspan dx="16.5">vswr</tspan></text>
<path d="M937.6,166.4 L941.2,169.3" stroke="#000" stroke-width="2.3" stroke-linecap="round" fill="none"/>
<path d="M962.7,166.4 L966.3,169.3" stroke="#000" stroke-width="2.3" stroke-linecap="round" fill="none"/>
<path d="M986.6,166.4 L990.2,169.3" stroke="#000" stroke-width="2.3" stroke-linecap="round" fill="none"/>
<rect x="1741" y="204" width="32" height="2" fill="#3366cc"/>
<text x="1779.3" y="210.5" font-family="'Liberation Sans', sans-serif" font-size="15.8" fill="#222">r</text>
<rect x="1741" y="230" width="32" height="2" fill="#dc3912"/>
<text x="1779.3" y="236.5" font-family="'Liberation Sans', sans-serif" font-size="15.8" fill="#222">x</text>
<rect x="1741" y="256" width="32" height="2" fill="#ff9900"/>
<text x="1779.3" y="262.5" font-family="'Liberation Sans', sans-serif" font-size="15.8" fill="#222">z</text>
</svg>
<div class="a" style="left:47px;top:544px;width:853px;height:528px;background:#fff;border:1px solid #959595;box-sizing:border-box"></div>
<svg class="a" style="left:0;top:0" width="1985" height="1114" viewBox="0 0 1985 1114">
<rect x="212" y="646" width="525" height="1" fill="#ccc"/>
<rect x="212" y="727" width="525" height="1" fill="#ccc"/>
<rect x="212" y="808" width="525" height="1" fill="#ccc"/>
<rect x="212" y="889" width="525" height="1" fill="#ccc"/>
<rect x="212" y="970" width="525" height="1" fill="#ccc"/>
<rect x="262.7" y="646" width="1" height="325" fill="#ccc"/>
<rect x="367.9" y="646" width="1" height="325" fill="#ccc"/>
<rect x="473.1" y="646" width="1" height="325" fill="#ccc"/>
<rect x="578.3" y="646" width="1" height="325" fill="#ccc"/>
<rect x="683.5" y="646" width="1" height="325" fill="#ccc"/>
<rect x="211" y="646" width="2" height="251" fill="#3366cc"/>
<rect x="211" y="897" width="2" height="74" fill="#4d7ad6"/>
<text x="196.7" y="651" font-family="'Liberation Sans', sans-serif" font-size="13.7" fill="#444" text-anchor="end">3</text>
<text x="196.7" y="732" font-family="'Liberation Sans', sans-serif" font-size="13.7" fill="#444" text-anchor="end">2.5</text>
<text x="196.7" y="813" font-family="'Liberation Sans', sans-serif" font-size="13.7" fill="#444" text-anchor="end">2</text>
<text x="196.7" y="894" font-family="'Liberation Sans', sans-serif" font-size="13.7" fill="#444" text-anchor="end">1.5</text>
<text x="196.7" y="975" font-family="'Liberation Sans', sans-serif" font-size="13.7" fill="#444" text-anchor="end">1</text>
<text x="263.2" y="991.4" font-family="'Liberation Sans', sans-serif" font-size="13.7" fill="#444" text-anchor="middle">5000000</text>
<text x="368.4" y="991.4" font-family="'Liberation Sans', sans-serif" font-size="13.7" fill="#444" text-anchor="middle">15000000</text>
<text x="473.6" y="991.4" font-family="'Liberation Sans', sans-serif" font-size="13.7" fill="#444" text-anchor="middle">25000000</text>
<text x="578.8" y="991.4" font-family="'Liberation Sans', sans-serif" font-size="13.7" fill="#444" text-anchor="middle">35000000</text>
<text x="684.0" y="991.4" font-family="'Liberation Sans', sans-serif" font-size="13.7" fill="#444" text-anchor="middle">45000000</text>
<text x="211.5" y="620.5" font-family="'Liberation Sans', sans-serif" font-size="15.8" font-weight="bold" fill="#000">vswr</text>
<rect x="751" y="652" width="28" height="2" fill="#3366cc"/>
<text x="784" y="658" font-family="'Liberation Sans', sans-serif" font-size="13.7" fill="#222">vswr</text>
<g transform="translate(113.2,807.7) rotate(-90)"><text x="0" y="-3" font-family="'Liberation Sans', sans-serif" font-size="14.2" font-style="italic" fill="#222" text-anchor="middle">ruby 2.0.0p645 (2015-04-13 revision 50299)</text><text x="0" y="15.1" font-family="'Liberation Sans', sans-serif" font-size="14.2" font-style="italic" fill="#222" text-anchor="middle">[universal.x86_64-darwin15]</text></g>
</svg>
</body></html>
